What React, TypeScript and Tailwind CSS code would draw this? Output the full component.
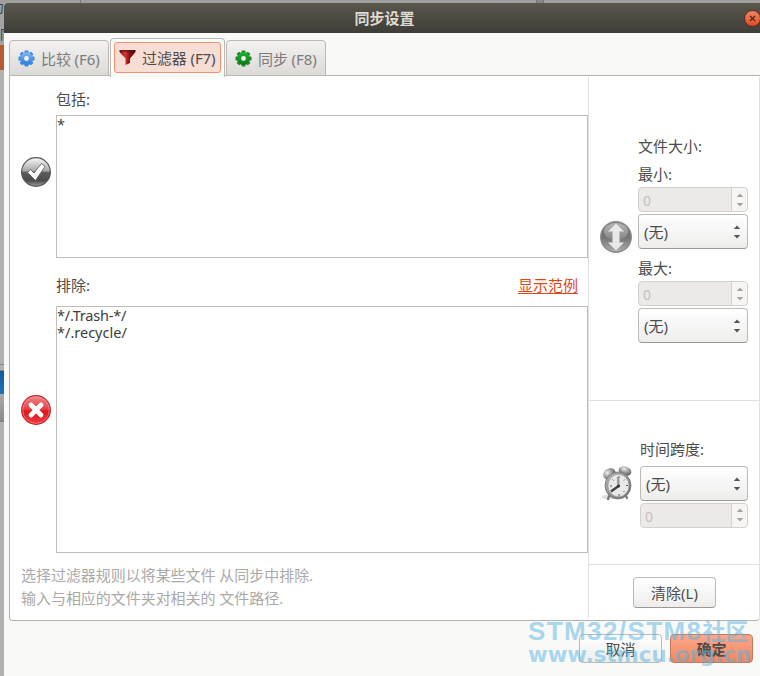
import type { ReactNode } from "react";
import clsx from "clsx";

const FONT = "font-['Noto_Sans','Noto_Sans_CJK_SC',sans-serif]";

function GearIcon({ id, from, to }: { id: string; from: string; to: string }) {
  return (
    <svg width="17" height="17" viewBox="-8.5 -8.5 17 17" className="shrink-0">
      <defs>
        <linearGradient id={id} x1="0" y1="-8" x2="0" y2="8" gradientUnits="userSpaceOnUse">
          <stop offset="0" stopColor={from} />
          <stop offset="1" stopColor={to} />
        </linearGradient>
      </defs>
      {[0, 45, 90, 135].map((a) => (
        <g key={a} transform={`rotate(${a})`}>
          <path d="M-2.200 -5.500L-1.700 -8H1.700L2.200 -5.500zM-2.200 5.500L-1.700 8H1.700L2.200 5.500z" fill={to} fillOpacity={0.85} />
        </g>
      ))}
      <circle r="6.3" fill={`url(#${id})`} />
      <circle r="2.4" fill="#f4f4f2" />
    </svg>
  );
}

function FunnelIcon() {
  return (
    <svg width="17" height="17" viewBox="0 0 17 17" className="-mt-px shrink-0">
      <defs>
        <linearGradient id="funnel">
          <stop offset="0" stopColor="#6e0b0d" />
          <stop offset="0.35" stopColor="#d8393b" />
          <stop offset="0.6" stopColor="#8c1012" />
          <stop offset="1" stopColor="#4c0507" />
        </linearGradient>
      </defs>
      <path d="M0.500 1h16v2L11 9.500V14L6.500 16V9.500L0.500 3z" fill="url(#funnel)" />
      <path d="M1.500 2h14" stroke="#5a0709" />
    </svg>
  );
}

function CheckIcon() {
  return (
    <svg width="30" height="30" viewBox="0 0 30 30">
      <defs>
        <linearGradient id="check" x1="0" y1="0" x2="0" y2="1">
          <stop offset="0" stopColor="#fafafa" />
          <stop offset="0.45" stopColor="#a9a9a9" />
          <stop offset="0.52" stopColor="#5c5c5c" />
          <stop offset="0.8" stopColor="#4c4c4c" />
          <stop offset="1" stopColor="#a0a0a0" />
        </linearGradient>
      </defs>
      <circle cx="15" cy="15" r="14.4" fill="url(#check)" stroke="#555" strokeWidth="1.1" />
      <path d="M6.500 15.500L9.500 12.500L13 16L20.500 6.500L24 9.500L14.500 23.500z" fill="#fff" stroke="#555" strokeWidth="0.8" />
    </svg>
  );
}

function CrossIcon() {
  return (
    <svg width="30" height="30" viewBox="0 0 30 30">
      <defs>
        <linearGradient id="cross" x1="0" y1="0" x2="0" y2="1">
          <stop offset="0" stopColor="#f08a8a" />
          <stop offset="0.45" stopColor="#e4444a" />
          <stop offset="0.55" stopColor="#e0161c" />
          <stop offset="1" stopColor="#ee3a40" />
        </linearGradient>
      </defs>
      <circle cx="15" cy="15" r="14.4" fill="url(#cross)" stroke="#c5242a" strokeWidth="1.1" />
      <circle cx="15" cy="15" r="13.3" fill="none" stroke="#f6a3a3" strokeOpacity="0.7" strokeWidth="0.8" />
      <path d="M10 10l10 10M20 10L10 20" stroke="#fff" strokeWidth="4.8" strokeLinecap="round" />
    </svg>
  );
}

function SizeIcon() {
  return (
    <svg width="32" height="32" viewBox="0 0 32 32">
      <defs>
        <linearGradient id="size" x1="0" y1="0" x2="0" y2="1">
          <stop offset="0" stopColor="#777" />
          <stop offset="0.5" stopColor="#727272" />
          <stop offset="1" stopColor="#b0b0b0" />
        </linearGradient>
        <linearGradient id="gloss" x1="0" y1="0" x2="0" y2="1">
          <stop offset="0" stopColor="#b4b4b4" />
          <stop offset="1" stopColor="#868686" />
        </linearGradient>
      </defs>
      <circle cx="16" cy="16" r="15.300" fill="url(#size)" stroke="#8d8d8d" strokeWidth="1.4" />
      <ellipse cx="16" cy="10.500" rx="12" ry="8.500" fill="url(#gloss)" />
      <path d="M16 2.500L24 10.500H19.500V21.500H24L16 29.500L8 21.500H12.500V10.500H8z" fill="#e8e8e8" />
    </svg>
  );
}

function ClockIcon() {
  return (
    <svg width="32" height="35" viewBox="0 0 32 35">
      <defs>
        <radialGradient id="bell" cx="0.4" cy="0.3" r="0.8">
          <stop offset="0" stopColor="#eee" />
          <stop offset="0.55" stopColor="#8b8b8b" />
          <stop offset="1" stopColor="#444" />
        </radialGradient>
        <linearGradient id="rim" x1="0" y1="0" x2="1" y2="1">
          <stop offset="0" stopColor="#b5b5b5" />
          <stop offset="1" stopColor="#6c6c6c" />
        </linearGradient>
      </defs>
      <ellipse cx="7" cy="31" rx="7" ry="2.500" fill="#ddd" />
      <path d="M8 28l-2 5M23 28l2 4" stroke="#777" strokeWidth="2.200" strokeLinecap="round" />
      <ellipse cx="7.500" cy="8" rx="6.500" ry="5.500" fill="url(#bell)" transform="rotate(-30 7.5 8)" />
      <ellipse cx="23" cy="5" rx="6.500" ry="4.500" fill="url(#bell)" transform="rotate(20 23 5)" />
      <ellipse cx="16" cy="19.500" rx="13" ry="13.500" fill="url(#rim)" stroke="#777" strokeWidth="0.8" />
      <ellipse cx="16.500" cy="19.500" rx="10.500" ry="11.200" fill="#e9e9e9" stroke="#999" strokeWidth="0.7" />
      <path d="M17 10v2M17 28v2M8 20h2M24 19.500h2M10.500 13.500l1 1M23 13.500l-1 1M22.500 26l-1-1" stroke="#555" />
      <path d="M16.500 20L16 11" stroke="#999" strokeWidth="2.400" />
      <path d="M16.500 20L9 25.500" stroke="#444" strokeWidth="2.400" />
      <circle cx="16.500" cy="20" r="1.600" fill="#333" />
    </svg>
  );
}

function Arrows({ className }: { className: string }) {
  return (
    <svg width="8" height="14" viewBox="0 0 8 14" className={className} fill="currentColor">
      <path d="M0.800 4L4 0.500L7.200 4zM0.800 10L4 13.500L7.200 10z" />
    </svg>
  );
}

function SpinBox() {
  return (
    <div className="flex h-[25px] w-full rounded border border-[#d3d1ce] bg-[#ebeae9] text-[14px] leading-[25px] text-[#c3bfba]">
      <span className="flex-1 pl-1">0</span>
      <span className="flex w-4 items-center justify-center rounded-r border-l border-[#d3d1ce] bg-[#f6f5f4]">
        <Arrows className="text-[#a5a3a0]" />
      </span>
    </div>
  );
}

function Select() {
  return (
    <div className="flex h-[35px] w-full items-center justify-between rounded border border-[#bdbab6] border-b-[#9c9995] bg-linear-to-b from-white to-[#eeedec] pt-px pr-[6px] pl-[5px] text-[15px] text-[#4c4c4c]">
      <span>(无)</span>
      <Arrows className="text-[#555]" />
    </div>
  );
}

function Tab({ icon, label }: { icon: ReactNode; label: string }) {
  return (
    <div className="flex h-9 w-[100px] items-center gap-[6px] rounded-t border border-[#bbb8b4] bg-linear-to-b from-[#f3f2f1] to-[#dcdad7] pt-px pl-2 text-[15px] whitespace-nowrap text-[#7b7b79]">
      {icon}
      <span className="tracking-[-0.1px]">{label}</span>
    </div>
  );
}

function Button({ children, className }: { children: ReactNode; className?: string }) {
  return (
    <button className={clsx("flex w-[83px] items-center justify-center rounded border text-[15px] text-[#4c4c4c]", className)}>
      {children}
    </button>
  );
}

// Sliver of the main window that stays visible left of the dialog
function Backdrop() {
  return (
    <div className="flex w-1 shrink-0 flex-col overflow-hidden bg-[#b3b2b1] text-[13px] leading-[21px] text-[#3a3d4c]">
      <div className="flex h-[21px] shrink-0 justify-end bg-[#a3a3a3] leading-[8px]">为</div>
      <div className="h-[21px] shrink-0 bg-[#a3a3a3] whitespace-nowrap">同</div>
      <div className="h-[25px] shrink-0 bg-[#b65b36]" />
      <div className="mt-[294px] h-[7px] shrink-0 border-y border-[#858585]" />
      <div className="h-[23px] shrink-0 bg-linear-to-b from-[#125b9b] to-[#1d73b8]" />
      <div className="h-7 shrink-0 border-b border-[#7d7d7d] bg-linear-to-b from-[#aaa] to-[#8b8b8b]" />
    </div>
  );
}

export default function App() {
  return (
    <div className={clsx("relative flex h-[676px] w-[760px] flex-col overflow-hidden bg-[#a3a3a3] text-[15px] leading-[20px] text-[#4c4c4c]", FONT)}>
      <div className="flex h-[3px] shrink-0 bg-[#9f9f9f]">
        <span className="ml-20 w-px bg-[#777]" />
        <span className="ml-[455px] w-2 border-x border-[#777] bg-[#888]" />
      </div>
      <div className="flex flex-1">
        <Backdrop />
        <div className="flex flex-1 flex-col overflow-hidden rounded-tl bg-[#f9f9f7]">
          <header className="flex h-[30px] shrink-0 items-center bg-linear-to-b from-[#5a574d] to-[#3e3d38]">
            <h1 className="flex-1 pl-[21px] text-center text-[15px] font-bold text-[#dfdbd2]">同步设置</h1>
            <span className="-mr-px flex size-[17px] items-center justify-center rounded-full border border-[#5b2d1b] bg-linear-to-b from-[#f58463] to-[#df4a1c]">
              <svg width="7" height="7" viewBox="0 0 7 7" stroke="#43291d" strokeWidth="1.200">
                <path d="M1 1l5 5M6 1l-5 5" />
              </svg>
            </span>
          </header>

          <nav className="relative z-10 -mb-[2px] flex h-11 shrink-0 items-start pt-[5px] pl-[5px]">
            <div className="pt-[2px]">
              <Tab icon={<GearIcon id="blue" from="#8cc0f5" to="#1f75dd" />} label="比较 (F6)" />
            </div>
            <div className="ml-[1px] h-[39px] w-[115px] rounded-t border border-b-0 border-[#bbb8b4] bg-[#fbfbfa] px-[3px] pt-[3px]">
              <div className="flex h-[31px] items-center gap-[6px] rounded-[3px] border border-[#f0906c] bg-[#f7ddd3] pl-1 whitespace-nowrap">
                <FunnelIcon />
                <span className="tracking-[-0.1px]">过滤器 (F7)</span>
              </div>
            </div>
            <div className="ml-[1px] pt-[2px]">
              <Tab icon={<GearIcon id="green" from="#21bd35" to="#05700f" />} label="同步 (F8)" />
            </div>
          </nav>

          <main className="ml-[5px] flex h-[546px] shrink-0 rounded-b border border-r-0 border-[#b5b2ae] bg-white">
            <section className="w-[578px] shrink-0">
              <p className="mt-[13px] pl-[46px]">包括:</p>
              <div className="mt-[6px] flex items-center">
                <div className="w-[46px] shrink-0 pb-[29px] pl-[11px]"><CheckIcon /></div>
                <div className="h-[143px] flex-1 border border-[#bfbdb8] text-[14.500px] leading-[17px] text-[#3c3c3c]">*</div>
              </div>
              <div className="mt-[17px] flex justify-between pr-[10px] pl-[46px]">
                <span>排除:</span>
                <a className="h-[19px] border-b border-[#dd4814] leading-[20px] text-[#dd4814]">显示范例</a>
              </div>
              <div className="mt-[11px] flex items-center">
                <div className="w-[46px] shrink-0 pb-[39px] pl-[11px]"><CrossIcon /></div>
                <div className="h-[247px] flex-1 border border-[#bfbdb8] text-[14.500px] leading-[17px] text-[#3c3c3c]">
                  <p className="tracking-[-0.2px]">*/.Trash-*/</p>
                  <p>*/.recycle/</p>
                </div>
              </div>
              <div className="mt-[11px] pl-[11px] leading-[23px] tracking-[-0.04px] text-[#aaa9a7]">
                <p>选择过滤器规则以将某些文件 从同步中排除.</p>
                <p>输入与相应的文件夹对相关的 文件路径.</p>
              </div>
            </section>

            <aside className="mt-px mb-[2px] flex flex-1 flex-col border-x border-[#e0e0df]">
              <div className="flex h-[324px] shrink-0 items-center border-b border-[#e0e0df] pl-[11px]">
                <div className="mb-[3px]"><SizeIcon /></div>
                <div className="mt-[2px] ml-[6px] w-[110px]">
                  <p className="h-[28px]">文件大小:</p>
                  <p className="mb-[3px]">最小:</p>
                  <SpinBox />
                  <div className="mt-[2px]"><Select /></div>
                  <p className="mt-[9px] mb-[3px]">最大:</p>
                  <SpinBox />
                  <div className="mt-[2px]"><Select /></div>
                </div>
              </div>
              <div className="flex h-[164px] shrink-0 items-center border-b border-[#e0e0df] pl-[13px]">
                <div className="mt-[2px]"><ClockIcon /></div>
                <div className="mt-px ml-[6px] w-[108px]">
                  <p className="mb-[7px]">时间跨度:</p>
                  <Select />
                  <div className="mt-[2px]"><SpinBox /></div>
                </div>
              </div>
              <div className="pt-3 pl-11">
                <Button className="h-[31px] border-[#bdbab6] border-b-[#9c9995] bg-linear-to-b from-white to-[#eeedec]">清除(L)</Button>
              </div>
            </aside>
          </main>

          <footer className="mt-[13px] flex justify-end gap-2 pr-[7px]">
            <Button className="h-[29px] border-[#bdbab6] bg-linear-to-b from-white to-[#eeedec]">取消</Button>
            <Button className="h-[29px] border-[#c47a5e] bg-linear-to-b from-[#fba88a] to-[#f0855e] font-bold">确定</Button>
          </footer>
        </div>
      </div>

      <div className="pointer-events-none absolute top-[616px] left-[528px] font-bold whitespace-nowrap text-[#55b4e3]/50">
        <p className="font-['Liberation_Sans','Noto_Sans_CJK_SC',sans-serif] text-[26px] leading-[30px] tracking-[1.400px]">
          STM32/STM8<span className="text-[23px] tracking-normal">社区</span>
        </p>
        <p className="-mt-[7px] font-['DejaVu_Sans',sans-serif] text-[21.300px] leading-[30px]">www.stmcu.org.cn</p>
      </div>
    </div>
  );
}
